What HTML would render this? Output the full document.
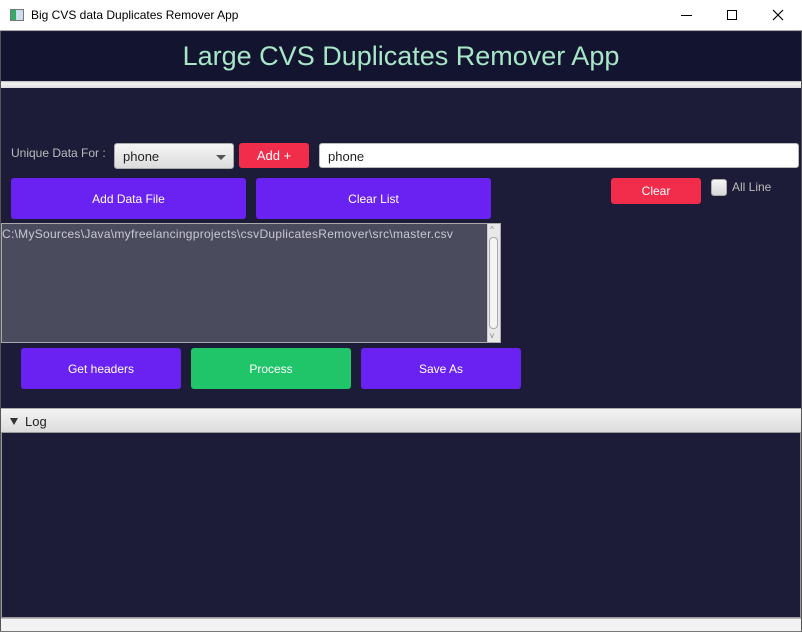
<!DOCTYPE html>
<html><head><meta charset="utf-8"><style>
*{box-sizing:border-box;margin:0;padding:0}
body{width:802px;height:632px;overflow:hidden;background:#1c1c38;font-family:"Liberation Sans",sans-serif;position:relative}
.a{position:absolute}
.btn{position:absolute;border-radius:3px;color:#fff;font-size:12px;display:flex;align-items:center;justify-content:center}
.p{background:#6a22f2}
.r{background:#f22c4b}
.g{background:#20c56a}
</style></head><body>
<div class="a" style="left:0;top:0;width:802px;height:632px;border:1px solid #555;border-top:none"></div>
<div class="a" style="left:0;top:0;width:802px;height:31px;background:#fff;border-bottom:1px solid #aaa"></div>
<div class="a" style="left:10px;top:9px;width:14px;height:12px;border:1px solid #777;background:linear-gradient(90deg,#3a6 0,#3a6 40%,#cde 40%)"></div>
<div class="a" style="left:31px;top:8px;font-size:12px;color:#000">Big CVS data Duplicates Remover App</div>
<div class="a" style="left:681px;top:15px;width:11px;height:1px;background:#000"></div>
<div class="a" style="left:727px;top:10px;width:10px;height:10px;border:1px solid #000"></div>
<svg class="a" style="left:772px;top:9px" width="12" height="12"><path d="M1 1L11 11M11 1L1 11" stroke="#000" stroke-width="1.2"/></svg>
<div class="a" style="left:1px;top:32px;width:800px;height:49px;background:#131530"></div>
<div class="a" style="left:0;top:41px;width:802px;text-align:center;font-size:27px;color:#a8e6c8">Large CVS Duplicates Remover App</div>
<div class="a" style="left:1px;top:81px;width:800px;height:7px;background:linear-gradient(#bbb,#f4f4f4 30%,#ddd)"></div>
<div class="a" style="left:11px;top:146px;font-size:12px;color:#bbb">Unique Data For :</div>
<div class="a" style="left:114px;top:143px;width:120px;height:26px;border:1px solid #aaa;border-radius:3px;background:linear-gradient(#f5f5f5,#dcdcdc);font-size:13px;padding:5px 8px;color:#222">phone</div>
<div class="a" style="left:216px;top:155px;border-left:5px solid transparent;border-right:5px solid transparent;border-top:5px solid #555"></div>
<div class="btn r" style="left:239px;top:143px;width:70px;height:25px;font-size:13px">Add +</div>
<div class="a" style="left:319px;top:143px;width:480px;height:25px;background:#fff;border:1px solid #bbb;border-radius:3px;font-size:13px;padding:5px 8px;color:#222">phone</div>
<div class="btn p" style="left:11px;top:178px;width:235px;height:41px">Add Data File</div>
<div class="btn p" style="left:256px;top:178px;width:235px;height:41px">Clear List</div>
<div class="btn r" style="left:611px;top:178px;width:90px;height:26px">Clear</div>
<div class="a" style="left:711px;top:179px;width:16px;height:17px;border:1px solid #aaa;border-radius:3px;background:linear-gradient(#f4f4f4,#d8d8d8)"></div>
<div class="a" style="left:732px;top:180px;font-size:12px;color:#bbb">All Line</div>
<div class="a" style="left:1px;top:223px;width:500px;height:120px;background:#4b4b5e;border:1px solid #aaa"></div>
<div class="a" style="left:2px;top:227px;font-size:12px;color:#c8c8d4;letter-spacing:0.28px">C:\MySources\Java\myfreelancingprojects\csvDuplicatesRemover\src\master.csv</div>
<div class="a" style="left:487px;top:224px;width:13px;height:118px;background:#e8e8e8;border-left:1px solid #ccc"></div>
<div class="a" style="left:489px;top:237px;width:9px;height:92px;background:#f4f4f4;border:1px solid #aaa;border-radius:4px"></div>
<div class="a" style="left:490px;top:225px;font-size:8px;color:#888">^</div>
<div class="a" style="left:490px;top:331px;font-size:8px;color:#888">v</div>
<div class="btn p" style="left:21px;top:348px;width:160px;height:41px">Get headers</div>
<div class="btn g" style="left:191px;top:348px;width:160px;height:41px">Process</div>
<div class="btn p" style="left:361px;top:348px;width:160px;height:41px">Save As</div>
<div class="a" style="left:1px;top:408px;width:800px;height:25px;background:linear-gradient(#f4f4f4,#dcdcdc);border-top:1px solid #aaa;border-bottom:1px solid #999"></div>
<div class="a" style="left:10px;top:418px;border-left:4px solid transparent;border-right:4px solid transparent;border-top:7px solid #333"></div>
<div class="a" style="left:25px;top:414px;font-size:13px;color:#222">Log</div>
<div class="a" style="left:1px;top:433px;width:800px;height:185px;background:#1c1c38;border:1px solid #999;border-top:none"></div>
<div class="a" style="left:1px;top:618px;width:800px;height:13px;background:#f2f2f2;border-top:1px solid #bbb"></div>
<div class="a" style="left:0;top:631px;width:802px;height:1px;background:#777"></div>
</body></html>
